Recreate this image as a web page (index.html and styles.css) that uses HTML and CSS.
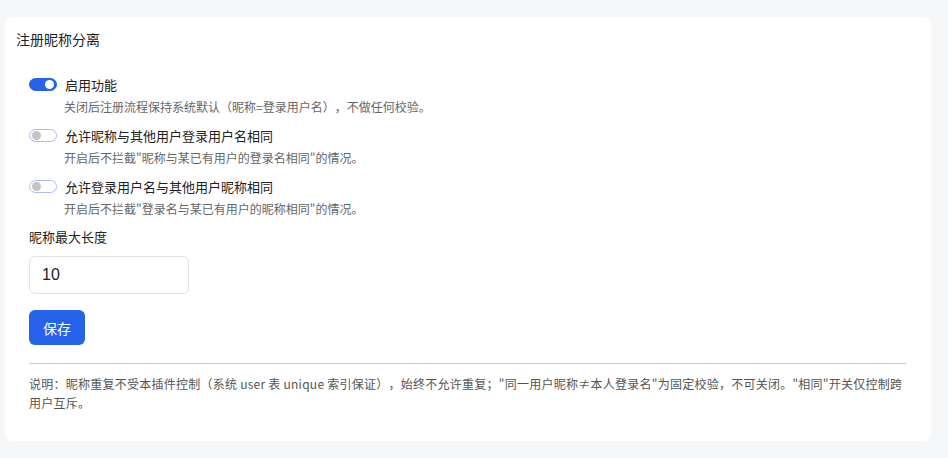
FILE: index.html
```html
<!DOCTYPE html>
<html lang="zh-CN">

<head>
    <meta charset="UTF-8">
    <meta name="viewport" content="width=device-width, initial-scale=1.0">
    <title>注册昵称分离</title>
    <link rel="stylesheet" href="styles.css">
</head>

<body>
    <div class="card">
        <div class="card-title">注册昵称分离</div>

        <div class="card-body">
            <div class="switch-row">
                <label class="switch-line">
                    <span class="switch on"><span class="knob"></span></span>
                    <span class="switch-label">启用功能</span>
                </label>
                <div class="hint">关闭后注册流程保持系统默认（昵称=登录用户名），不做任何校验。</div>
            </div>

            <div class="switch-row">
                <label class="switch-line">
                    <span class="switch"><span class="knob"></span></span>
                    <span class="switch-label">允许昵称与其他用户登录用户名相同</span>
                </label>
                <div class="hint">开启后不拦截"昵称与某已有用户的登录名相同"的情况。</div>
            </div>

            <div class="switch-row">
                <label class="switch-line">
                    <span class="switch"><span class="knob"></span></span>
                    <span class="switch-label">允许登录用户名与其他用户昵称相同</span>
                </label>
                <div class="hint">开启后不拦截"登录名与某已有用户的昵称相同"的情况。</div>
            </div>

            <div class="field-label">昵称最大长度</div>
            <input type="text" class="field-input" value="10">

            <div>
                <button type="button" class="btn-save">保存</button>
            </div>

            <hr class="divider">

            <p class="note">说明：昵称重复不受本插件控制（系统 user 表 unique 索引保证），始终不允许重复；"同一用户昵称≠本人登录名"为固定校验，不可关闭。"相同"开关仅控制跨用户互斥。</p>
        </div>
    </div>
</body>

</html>
```

FILE: styles.css
```css
* {
    margin: 0;
    padding: 0;
    box-sizing: border-box;
}

body {
    background-color: #f6f7f9;
    font-family: "Noto Sans CJK SC", "Noto Sans", sans-serif;
    color: #222;
    padding: 17px 17px 18px 5px;
    text-spacing-trim: space-all;
}

.card {
    background-color: #fff;
    border-radius: 8px;
    padding: 12px 12px 17px 11px;
}

.card-title {
    font-size: 14px;
    line-height: 20px;
}

.card-body {
    padding: 25px 13px 12px 13px;
}

.switch-row {
    margin-bottom: 9px;
}

.switch-line {
    display: flex;
    align-items: center;
    gap: 8px;
    height: 20px;
    cursor: pointer;
}

.switch {
    position: relative;
    width: 28px;
    height: 13px;
    border-radius: 7px;
    border: 1px solid #a9bcf3;
    background-color: #fff;
}

.switch .knob {
    position: absolute;
    top: 1px;
    left: 2px;
    width: 9px;
    height: 9px;
    border-radius: 50%;
    background-color: #c4c4c4;
}

.switch.on {
    background-color: #2563eb;
    border-color: #2563eb;
}

.switch.on .knob {
    left: auto;
    right: 2px;
    background-color: #fff;
}

.switch-label {
    font-size: 13px;
}

.hint {
    margin-top: 4px;
    padding-left: 35px;
    font-size: 12px;
    line-height: 18px;
    color: #666;
}

.field-label {
    margin-top: 1px;
    font-size: 13px;
    line-height: 20px;
}

.field-input {
    display: block;
    margin-top: 9px;
    width: 160px;
    height: 38px;
    padding: 0 12px;
    font-family: "Liberation Sans", Arial, sans-serif;
    font-size: 16px;
    color: #222;
    border: 1px solid #e2e2e2;
    border-radius: 6px;
    outline: none;
}

.btn-save {
    margin-top: 16px;
    width: 56px;
    height: 35px;
    font-family: inherit;
    font-size: 14px;
    color: #fff;
    background-color: #2563eb;
    border: none;
    border-radius: 6px;
    cursor: pointer;
}

.divider {
    margin-top: 18px;
    border: none;
    border-top: 1px solid #c8c8c8;
}

.note {
    margin-top: 10px;
    font-size: 12px;
    line-height: 19px;
    letter-spacing: 0.25px;
    color: #555;
}
```
